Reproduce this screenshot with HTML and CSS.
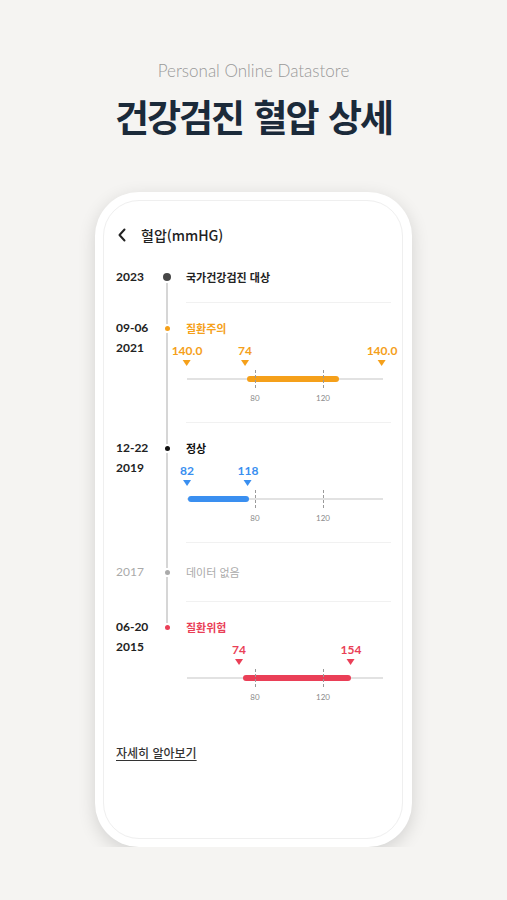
FILE: index.html
```html
<!DOCTYPE html>
<html lang="ko">
  <head>
    <meta charset="utf-8" />
    <title>건강검진 혈압 상세</title>
    <link rel="stylesheet" href="styles.css">
  </head>

  <body>
    <div class="page">
      <p class="subtitle">Personal Online Datastore</p>
      <h1 class="heading">건강검진 혈압 상세</h1>

      <div class="phone">
        <div class="screen">
          <div class="topbar">
            <svg class="back" width="10" height="14" viewBox="0 0 10 14">
              <polyline points="7.5,1.5 2.5,7 7.5,12.5" fill="none" stroke="#222" stroke-width="2" stroke-linecap="round" stroke-linejoin="round" />
            </svg>
            <span class="topbar-title">혈압(mmHG)</span>
          </div>

          <div class="timeline">
            <div class="entry first big">
              <div class="date">2023</div>
              <div class="rail"><i class="seg-top"></i><b class="dot"></b><i class="seg-bottom"></i></div>
              <div class="body">
                <div class="status">국가건강검진 대상</div>
              </div>
            </div>

            <div class="entry warn">
              <div class="date">09-06<br>2021</div>
              <div class="rail"><i class="seg-top"></i><b class="dot"></b><i class="seg-bottom"></i></div>
              <div class="body">
                <div class="status">질환주의</div>
                <div class="chart">
                  <div class="track"></div>
                  <div class="bar" style="left: 30.6%; width: 46.9%"></div>
                  <div class="tick tick-80"></div>
                  <div class="tick tick-120"></div>
                  <span class="tick-label tick-80">80</span>
                  <span class="tick-label tick-120">120</span>
                  <div class="marker" style="left: 0%"><span>140.0</span><i></i></div>
                  <div class="marker" style="left: 29.6%"><span>74</span><i></i></div>
                  <div class="marker" style="left: 99.5%"><span>140.0</span><i></i></div>
                </div>
              </div>
            </div>

            <div class="entry normal">
              <div class="date">12-22<br>2019</div>
              <div class="rail"><i class="seg-top"></i><b class="dot"></b><i class="seg-bottom"></i></div>
              <div class="body">
                <div class="status">정상</div>
                <div class="chart">
                  <div class="track"></div>
                  <div class="bar" style="left: 0.5%; width: 31.1%"></div>
                  <div class="tick tick-80"></div>
                  <div class="tick tick-120"></div>
                  <span class="tick-label tick-80">80</span>
                  <span class="tick-label tick-120">120</span>
                  <div class="marker" style="left: 0%"><span>82</span><i></i></div>
                  <div class="marker" style="left: 31.1%"><span>118</span><i></i></div>
                </div>
              </div>
            </div>

            <div class="entry empty">
              <div class="date">2017</div>
              <div class="rail"><i class="seg-top"></i><b class="dot"></b><i class="seg-bottom"></i></div>
              <div class="body">
                <div class="status">데이터 없음</div>
              </div>
            </div>

            <div class="entry danger last">
              <div class="date">06-20<br>2015</div>
              <div class="rail"><i class="seg-top"></i><b class="dot"></b><i class="seg-bottom"></i></div>
              <div class="body">
                <div class="status">질환위험</div>
                <div class="chart">
                  <div class="track"></div>
                  <div class="bar" style="left: 28.6%; width: 55.1%"></div>
                  <div class="tick tick-80"></div>
                  <div class="tick tick-120"></div>
                  <span class="tick-label tick-80">80</span>
                  <span class="tick-label tick-120">120</span>
                  <div class="marker" style="left: 26.5%"><span>74</span><i></i></div>
                  <div class="marker" style="left: 83.7%"><span>154</span><i></i></div>
                </div>
              </div>
            </div>
          </div>

          <a class="more" href="#">자세히 알아보기</a>
        </div>
      </div>
    </div>
  </body>
</html>
```

FILE: styles.css
```css
body {
  margin: 0;
  background-color: #f5f4f2;
  font-family: Lato, 'Noto Sans CJK KR', sans-serif;
  color: #222222;
}
.page {
  display: flex;
  flex-direction: column;
  align-items: center;
  padding-top: 61px;
}
.subtitle {
  margin: 0;
  font-size: 17px;
  font-weight: 300;
  line-height: 20px;
  color: #999999;
}
.heading {
  margin: 13px 0 0;
  font-family: 'Noto Sans CJK KR', sans-serif;
  font-size: 37px;
  font-weight: 700;
  line-height: 44px;
  letter-spacing: -2px;
  word-spacing: 2px;
  color: #1b2a3a;
}

/* phone frame */
.phone {
  margin-top: 54px;
  width: 317px;
  height: 655px;
  box-sizing: border-box;
  padding: 8px 9px 8px 8px;
  background-color: #ffffff;
  border-radius: 44px;
  box-shadow: 0 5px 18px rgba(0, 0, 0, 0.14);
}
.screen {
  height: 100%;
  box-sizing: border-box;
  padding: 23px 11px 0 12px;
  border: 1px solid #efefef;
  border-radius: 36px;
}
.topbar {
  display: flex;
  align-items: center;
  height: 22px;
  padding-left: 1px;
}
.back {
  display: block;
}
.topbar-title {
  margin-left: 14px;
  font-family: 'Noto Sans CJK KR', sans-serif;
  font-size: 14px;
  font-weight: 500;
  line-height: 22px;
}

/* timeline */
.timeline {
  margin-top: 21px;
}
.entry {
  --pt: 15px;
  --pb: 19px;
  --dot: 5px;
  --tone: #222222;
  --label: var(--tone);
  --mark: var(--label);
  display: grid;
  grid-template-columns: 43px 16px 1fr;
}
.entry.first {
  --pt: 0px;
  --pb: 15px;
}
.entry.empty {
  --pt: 19px;
  --pb: 19px;
  --tone: #aaaaaa;
}
.entry.big {
  --dot: 8px;
  --label: #222222;
  --mark: #474747;
}
.entry.warn {
  --tone: #f5a01a;
}
.entry.normal {
  --tone: #3a8ff0;
  --label: #111111;
}
.entry.danger {
  --tone: #ea3f57;
}
.date {
  padding-top: var(--pt);
  font-size: 12px;
  font-weight: 700;
  line-height: 20px;
  color: #222222;
}
.entry.empty .date {
  font-weight: 400;
  color: #aaaaaa;
}
.rail {
  display: flex;
  flex-direction: column;
  align-items: center;
}
.rail i {
  width: 2px;
  background-color: #d6d6d6;
}
.seg-top {
  height: calc(var(--pt) + 10px - var(--dot) / 2 - 2px);
  margin-bottom: 2px;
}
.seg-bottom {
  flex: 1;
  margin-top: 2px;
}
.entry.first .seg-top,
.entry.last .seg-bottom {
  visibility: hidden;
}
.dot {
  width: var(--dot);
  height: var(--dot);
  border-radius: 50%;
  background-color: var(--mark);
}
.body {
  margin-left: 11px;
  padding-top: var(--pt);
  padding-bottom: var(--pb);
  border-bottom: 1px solid #f1f1f1;
}
.entry.last .body {
  border-bottom: none;
  padding-bottom: 0;
}
.status {
  font-family: 'Noto Sans CJK KR', sans-serif;
  font-size: 11px;
  font-weight: 700;
  line-height: 20px;
  color: var(--label);
}
.entry.empty .status {
  font-weight: 400;
}

/* range chart */
.chart {
  position: relative;
  width: 196px;
  height: 60px;
  margin: 5px 0 0 1px;
}
.track {
  position: absolute;
  left: 0;
  right: 0;
  top: 35px;
  height: 2px;
  background-color: #e2e2e2;
}
.bar {
  position: absolute;
  top: 33px;
  height: 6px;
  border-radius: 3px;
  background-color: var(--tone);
}
.tick {
  position: absolute;
  top: 27px;
  height: 18px;
  border-left: 1px dashed #9a9a9a;
}
.tick-80 {
  left: 34.7%;
}
.tick-120 {
  left: 69.4%;
}
.tick-label {
  position: absolute;
  top: 50px;
  transform: translateX(-50%);
  font-size: 8px;
  line-height: 10px;
  color: #8a8a8a;
}
.marker {
  position: absolute;
  top: 0;
  display: flex;
  flex-direction: column;
  align-items: center;
  transform: translateX(-50%);
}
.marker span {
  font-size: 12px;
  font-weight: 700;
  line-height: 16px;
  color: var(--tone);
}
.marker i {
  margin-top: 1px;
  width: 0;
  height: 0;
  border-left: 4px solid transparent;
  border-right: 4px solid transparent;
  border-top: 6px solid var(--tone);
}

.more {
  display: inline-block;
  margin-top: 41px;
  font-family: 'Noto Sans CJK KR', sans-serif;
  font-size: 12px;
  font-weight: 500;
  line-height: 20px;
  color: #333333;
  text-decoration: underline;
  text-underline-offset: 2px;
}
```
